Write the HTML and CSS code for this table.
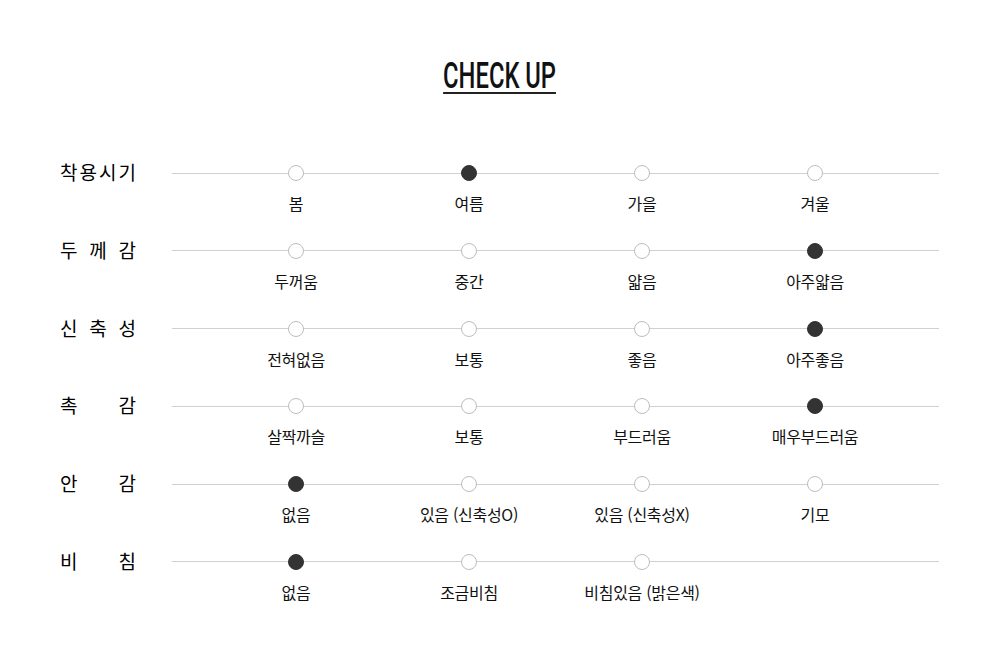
FILE: index.html
```html
<!DOCTYPE html>
<html lang="ko">
<head>
<meta charset="utf-8">
<link rel="stylesheet" href="styles.css">
</head>
<body>
<div class="page">
  <div class="title-wrap"><h1 class="title">CHECK UP</h1></div>
  <div class="rows">
    <div class="row">
      <div class="label"><span>착</span><span>용</span><span>시</span><span>기</span></div>
      <div class="track">
        <div class="opt"><i class="dot"></i><span class="txt">봄</span></div>
        <div class="opt"><i class="dot on"></i><span class="txt">여름</span></div>
        <div class="opt"><i class="dot"></i><span class="txt">가을</span></div>
        <div class="opt"><i class="dot"></i><span class="txt">겨울</span></div>
      </div>
    </div>
    <div class="row">
      <div class="label"><span>두</span><span>께</span><span>감</span></div>
      <div class="track">
        <div class="opt"><i class="dot"></i><span class="txt">두꺼움</span></div>
        <div class="opt"><i class="dot"></i><span class="txt">중간</span></div>
        <div class="opt"><i class="dot"></i><span class="txt">얇음</span></div>
        <div class="opt"><i class="dot on"></i><span class="txt">아주얇음</span></div>
      </div>
    </div>
    <div class="row">
      <div class="label"><span>신</span><span>축</span><span>성</span></div>
      <div class="track">
        <div class="opt"><i class="dot"></i><span class="txt">전혀없음</span></div>
        <div class="opt"><i class="dot"></i><span class="txt">보통</span></div>
        <div class="opt"><i class="dot"></i><span class="txt">좋음</span></div>
        <div class="opt"><i class="dot on"></i><span class="txt">아주좋음</span></div>
      </div>
    </div>
    <div class="row">
      <div class="label"><span>촉</span><span>감</span></div>
      <div class="track">
        <div class="opt"><i class="dot"></i><span class="txt">살짝까슬</span></div>
        <div class="opt"><i class="dot"></i><span class="txt">보통</span></div>
        <div class="opt"><i class="dot"></i><span class="txt">부드러움</span></div>
        <div class="opt"><i class="dot on"></i><span class="txt">매우부드러움</span></div>
      </div>
    </div>
    <div class="row">
      <div class="label"><span>안</span><span>감</span></div>
      <div class="track">
        <div class="opt"><i class="dot on"></i><span class="txt">없음</span></div>
        <div class="opt"><i class="dot"></i><span class="txt">있음 (신축성O)</span></div>
        <div class="opt"><i class="dot"></i><span class="txt">있음 (신축성X)</span></div>
        <div class="opt"><i class="dot"></i><span class="txt">기모</span></div>
      </div>
    </div>
    <div class="row">
      <div class="label"><span>비</span><span>침</span></div>
      <div class="track">
        <div class="opt"><i class="dot on"></i><span class="txt">없음</span></div>
        <div class="opt"><i class="dot"></i><span class="txt">조금비침</span></div>
        <div class="opt"><i class="dot"></i><span class="txt">비침있음 (밝은색)</span></div>
        <div class="opt"></div>
      </div>
    </div>
  </div>
</div>
</body>
</html>
```
FILE: styles.css
```css
html, body {
  margin: 0;
  padding: 0;
  background: #fff;
}
body {
  font-family: "Noto Sans CJK KR", "Noto Sans", sans-serif;
  color: #111;
}
.page {
  width: 1000px;
  height: 661px;
  overflow: hidden;
}
.title-wrap {
  display: flex;
  justify-content: center;
  padding-top: 60px;
}
.title {
  margin: 0;
  font-family: Roboto, "Liberation Sans", sans-serif;
  font-weight: 500;
  font-size: 36px;
  line-height: 32px;
  color: #111;
  border-bottom: 2px solid #222;
  transform: scaleX(0.66);
  transform-origin: center;
}
.rows {
  margin-top: 71px;
  padding-left: 60px;
  display: grid;
  grid-auto-rows: 77.8px;
}
.row {
  display: grid;
  grid-template-columns: 112px 767px;
  align-items: start;
}
.label {
  width: 76px;
  height: 16px;
  display: flex;
  justify-content: space-between;
  font-size: 19px;
  font-weight: 400;
  line-height: 14px;
  color: #000;
}
.track {
  display: grid;
  grid-template-columns: repeat(4, 173px);
  padding: 0 37.5px;
  background: linear-gradient(#d0d0d0, #d0d0d0) 0 7.5px / 100% 1px no-repeat;
}
.opt {
  display: flex;
  flex-direction: column;
  align-items: center;
}
.dot {
  display: block;
  width: 16px;
  height: 16px;
  box-sizing: border-box;
  border-radius: 50%;
  border: 1px solid #bdbdbd;
  background: #fff;
}
.dot.on {
  border-color: #333;
  background: #333;
}
.txt {
  margin-top: 12px;
  font-size: 16px;
  line-height: 20px;
  white-space: nowrap;
  letter-spacing: -0.3px;
  color: #111;
}
```
